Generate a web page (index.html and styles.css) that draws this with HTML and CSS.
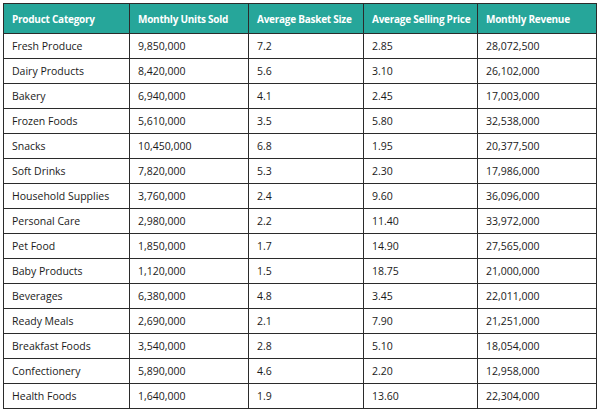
FILE: index.html
```html
<!DOCTYPE html>
<html>
<head>
<meta charset="utf-8">
<link rel="stylesheet" href="styles.css">
</head>
<body>
<table class="data">
  <colgroup>
    <col class="c1"><col class="c2"><col class="c3"><col class="c4"><col class="c5">
  </colgroup>
  <thead>
    <tr><th>Product Category</th><th>Monthly Units Sold</th><th>Average Basket Size</th><th>Average Selling Price</th><th>Monthly Revenue</th></tr>
  </thead>
  <tbody>
    <tr><td>Fresh Produce</td><td>9,850,000</td><td>7.2</td><td>2.85</td><td>28,072,500</td></tr>
    <tr><td>Dairy Products</td><td>8,420,000</td><td>5.6</td><td>3.10</td><td>26,102,000</td></tr>
    <tr><td>Bakery</td><td>6,940,000</td><td>4.1</td><td>2.45</td><td>17,003,000</td></tr>
    <tr><td>Frozen Foods</td><td>5,610,000</td><td>3.5</td><td>5.80</td><td>32,538,000</td></tr>
    <tr><td>Snacks</td><td>10,450,000</td><td>6.8</td><td>1.95</td><td>20,377,500</td></tr>
    <tr><td>Soft Drinks</td><td>7,820,000</td><td>5.3</td><td>2.30</td><td>17,986,000</td></tr>
    <tr><td>Household Supplies</td><td>3,760,000</td><td>2.4</td><td>9.60</td><td>36,096,000</td></tr>
    <tr><td>Personal Care</td><td>2,980,000</td><td>2.2</td><td>11.40</td><td>33,972,000</td></tr>
    <tr><td>Pet Food</td><td>1,850,000</td><td>1.7</td><td>14.90</td><td>27,565,000</td></tr>
    <tr><td>Baby Products</td><td>1,120,000</td><td>1.5</td><td>18.75</td><td>21,000,000</td></tr>
    <tr><td>Beverages</td><td>6,380,000</td><td>4.8</td><td>3.45</td><td>22,011,000</td></tr>
    <tr><td>Ready Meals</td><td>2,690,000</td><td>2.1</td><td>7.90</td><td>21,251,000</td></tr>
    <tr><td>Breakfast Foods</td><td>3,540,000</td><td>2.8</td><td>5.10</td><td>18,054,000</td></tr>
    <tr><td>Confectionery</td><td>5,890,000</td><td>4.6</td><td>2.20</td><td>12,958,000</td></tr>
    <tr><td>Health Foods</td><td>1,640,000</td><td>1.9</td><td>13.60</td><td>22,304,000</td></tr>
  </tbody>
</table>
</body>
</html>
```

FILE: styles.css
```css
html, body {
  margin: 0;
  padding: 0;
  background: #ffffff;
}
body {
  padding: 3px 0 0 3px;
  font-family: "Open Sans", "Noto Sans", sans-serif;
  color: #1a1a1a;
}
.data {
  border-collapse: collapse;
  width: 593px;
  table-layout: fixed;
  font-size: 10.5px;
}
.c1 { width: 126px; }
.c2 { width: 119px; }
.c3 { width: 115px; }
.c4 { width: 114px; }
.c5 { width: 119px; }
.data th, .data td {
  border: 1px solid #2b2b2b;
  text-align: left;
  padding: 0 8px;
  white-space: nowrap;
  overflow: hidden;
}
.data th {
  background: #26a69a;
  color: #ffffff;
  font-weight: 700;
  font-size: 10px;
  letter-spacing: -0.25px;
  height: 29px;
}
.data td {
  height: 24px;
}
```
